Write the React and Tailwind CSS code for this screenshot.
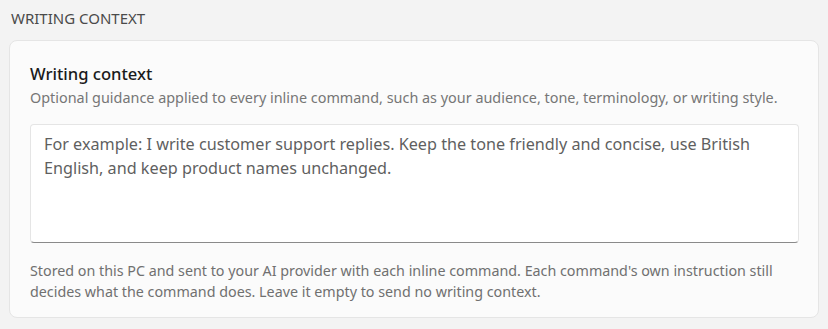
export default function App() {
  return (
    <div
      className="bg-[#f3f3f3] w-[828px] h-[329px] pt-[8px] px-[9px] text-[#1b1b1b]"
      style={{ fontFamily: '"Noto Sans", "Open Sans", sans-serif' }}
    >
      {/* Section label */}
      <h2 className="text-[15px] leading-[20px] text-[#4a4a4a] pl-[2px]">
        WRITING CONTEXT
      </h2>

      {/* Card */}
      <div className="mt-[12px] w-[810px] h-[278px] bg-[#fbfbfb] border border-[#e5e5e5] rounded-[8px] px-[20px] pt-[22px]">
        <h3 className="text-[16.6px] leading-[22px] font-medium text-[#1a1a1a]">Writing context</h3>
        <p className="mt-[4px] text-[14.4px] leading-[18px] text-[#767676] whitespace-nowrap">
          Optional guidance applied to every inline command, such as your audience, tone, terminology, or writing style.
        </p>

        <div className="mt-[17px] w-[769px] h-[119px] bg-white border border-[#e5e5e5] border-b-[#8a8a8a] rounded-[4px] px-[13px] pt-[7px]">
          <p className="text-[16.2px] leading-[24px] text-[#5f5f5f]">
            For example: I write customer support replies. Keep the tone friendly and concise, use British English, and keep product names unchanged.
          </p>
        </div>

        <p className="mt-[17px] text-[14.3px] leading-[21px] text-[#707070]">
          Stored on this PC and sent to your AI provider with each inline command. Each command's own instruction still decides what the command does. Leave it empty to send no writing context.
        </p>
      </div>
    </div>
  );
}
